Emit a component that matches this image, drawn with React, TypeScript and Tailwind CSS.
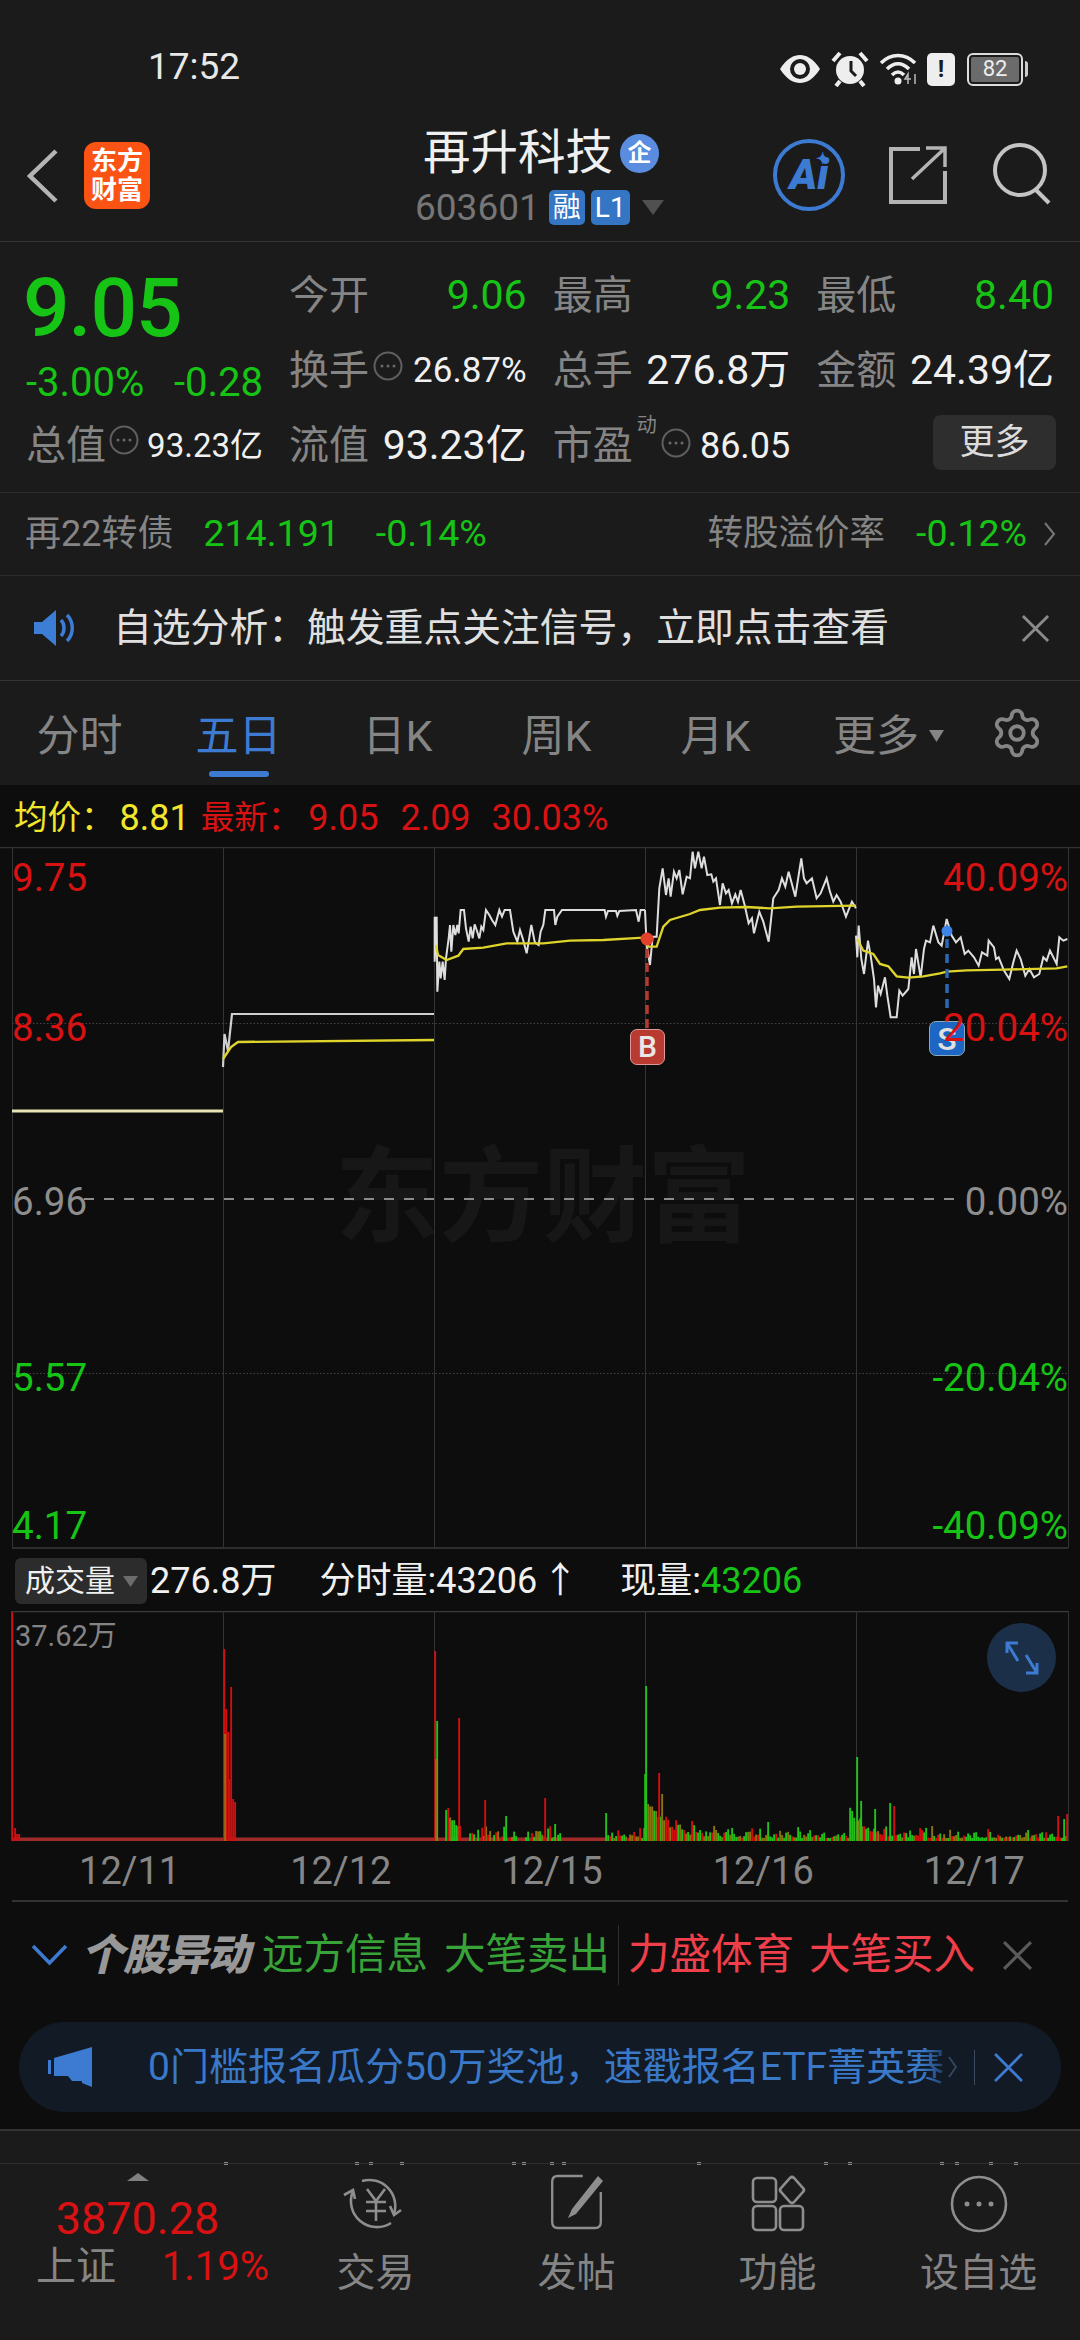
import type { ReactNode } from "react";
import { Settings } from "lucide-react";

const GREEN = "text-[#16c416]";
const RED = "text-[#d81212]";

// trace points are in 3x crop coordinates, scaled back down inside the svg
const day3White =
  "14,215 14,350 20,215 22,440 28,350 32,400 38,350 44,405 48,340 56,280 60,240 64,320 70,240 76,270 82,240 86,265 92,195 102,195 108,250 116,290 122,245 128,280 134,238 140,255 148,280 154,245 160,255 168,195 178,210 186,225 196,240 208,195 216,215 224,195 240,195 250,260 262,290 270,255 278,280 290,325 296,290 304,240 314,290 318,295 326,300 332,260 340,240 346,195 372,195 376,240 382,215 396,195 524,195 528,215 534,198 558,198 562,212 568,198 618,195 626,230 632,195 645,195";
const day4White =
  "645,195 650,300 660,360 668,275 680,275 688,130 698,70 708,150 716,100 722,155 732,80 740,100 748,75 758,148 770,95 780,100 788,20 795,70 805,20 815,70 822,35 832,90 844,88 850,110 858,100 870,180 878,115 888,145 896,135 906,175 916,148 924,170 932,135 944,180 956,235 966,220 972,265 988,200 1000,230 1016,290 1030,160 1046,135 1056,100 1066,125 1076,80 1088,125 1096,155 1114,40 1122,100 1130,115 1146,100 1160,160 1172,145 1190,100 1200,140 1210,170 1220,150 1232,170 1248,215 1256,195 1266,170 1278,190";
const day3Avg =
  "18,300 24,330 50,345 85,332 100,312 160,308 230,295 340,295 420,287 520,285 640,278 655,305 680,305 700,245 720,225 780,207 810,195 870,188 950,186 1020,190 1100,185 1278,182";
const day5White =
  "18,170 22,235 26,140 34,240 42,285 54,185 62,230 72,300 78,385 84,320 92,345 105,295 112,350 122,415 140,415 148,335 158,350 175,330 185,235 192,285 198,210 212,295 222,210 228,185 240,190 250,140 265,190 275,200 290,120 305,170 318,190 332,175 344,225 355,215 372,235 386,260 396,220 412,230 416,185 432,205 438,240 446,235 462,275 478,300 490,250 500,215 512,240 526,290 538,270 552,295 568,285 580,235 590,245 600,215 620,255 628,175 640,185 652,180";
const day5Avg =
  "22,180 40,215 70,225 90,255 115,262 140,292 175,296 220,292 270,283 290,278 350,274 460,272 620,268 652,262";

type Bar = { x: number; top: number; color: string };

const BAR_RED = "#d01010";
const BAR_GREEN = "#22c01a";
const BAR_OLIVE = "#8a7412";
const VOL_BASE = 1842;

const bigBars: Bar[] = [
  { x: 12, top: 1613, color: BAR_RED },
  { x: 224, top: 1650, color: BAR_RED },
  { x: 226, top: 1710, color: BAR_RED },
  { x: 225, top: 1735, color: BAR_OLIVE },
  { x: 228, top: 1733, color: BAR_RED },
  { x: 229, top: 1780, color: BAR_RED },
  { x: 231, top: 1688, color: BAR_RED },
  { x: 233, top: 1800, color: BAR_RED },
  { x: 235, top: 1803, color: BAR_RED },
  { x: 435, top: 1652, color: BAR_RED },
  { x: 437, top: 1722, color: BAR_GREEN },
  { x: 436, top: 1760, color: BAR_OLIVE },
  { x: 459, top: 1719, color: BAR_RED },
  { x: 485, top: 1801, color: BAR_RED },
  { x: 506, top: 1817, color: BAR_GREEN },
  { x: 545, top: 1799, color: BAR_RED },
  { x: 555, top: 1825, color: BAR_GREEN },
  { x: 606, top: 1814, color: BAR_GREEN },
  { x: 646, top: 1687, color: BAR_GREEN },
  { x: 645, top: 1775, color: BAR_GREEN },
  { x: 659, top: 1774, color: BAR_RED },
  { x: 662, top: 1795, color: BAR_OLIVE },
  { x: 692, top: 1822, color: BAR_RED },
  { x: 768, top: 1823, color: BAR_GREEN },
  { x: 857, top: 1758, color: BAR_GREEN },
  { x: 861, top: 1802, color: BAR_GREEN },
  { x: 875, top: 1810, color: BAR_GREEN },
  { x: 890, top: 1804, color: BAR_GREEN },
  { x: 894, top: 1807, color: BAR_RED },
  { x: 1058, top: 1817, color: BAR_RED },
  { x: 1067, top: 1815, color: BAR_RED },
  { x: 1064, top: 1820, color: BAR_GREEN },
];

function makeSmallBars(): Bar[] {
  let seed = 77;
  const rnd = () => {
    seed = (seed * 16807) % 2147483647;
    return seed / 2147483647;
  };
  const bars: Bar[] = [];
  const burst = (x: number, from: number, size: number, fall: number) =>
    x >= from ? size * Math.exp(-(x - from) / fall) : 0;
  for (let x = 436; x < 1068; x += 2) {
    if (x > 560 && x < 606) continue;
    const sparse = x < 606 && rnd() < 0.4;
    if (sparse) continue;
    const h =
      3 +
      rnd() * rnd() * (x < 606 ? 15 : 13) +
      burst(x, 436, 52, 14) +
      burst(x, 646, 38, 18) +
      burst(x, 850, 24, 14);
    const pick = rnd();
    const color = pick < 0.4 ? BAR_GREEN : pick < 0.7 ? BAR_OLIVE : BAR_RED;
    bars.push({ x, top: VOL_BASE - h, color });
  }
  bars.push({ x: 15, top: 1829, color: BAR_RED }, { x: 17, top: 1835, color: BAR_RED }, { x: 19, top: 1835, color: BAR_RED });
  return bars;
}

const volBars = [...makeSmallBars(), ...bigBars];

const peekMarks = [224, 355, 369, 400, 512, 522, 550, 562, 697, 824, 848, 940, 955, 989, 1014];

function Dots() {
  return (
    <svg width="30" height="30" viewBox="0 0 30 30" className="shrink-0">
      <circle cx="15" cy="15" r="13.5" fill="none" stroke="#5f5f5f" strokeWidth="2" />
      <circle cx="9" cy="15" r="1.5" fill="#6a6a6a" />
      <circle cx="15" cy="15" r="1.5" fill="#6a6a6a" />
      <circle cx="21" cy="15" r="1.5" fill="#6a6a6a" />
    </svg>
  );
}

function Cell({ label, children }: { label: ReactNode; children: ReactNode }) {
  return (
    <div className="flex items-center justify-between">
      <span className="text-[40px] leading-none text-[#858585]">{label}</span>
      {children}
    </div>
  );
}

function CloseX({ size, color, width = 3 }: { size: number; color: string; width?: number }) {
  return (
    <svg width={size} height={size} viewBox="0 0 30 30" className="shrink-0">
      <path d="M2 2 L28 28 M28 2 L2 28" stroke={color} strokeWidth={width} fill="none" />
    </svg>
  );
}

function StatusBar() {
  return (
    <div className="flex h-[92px] items-end pb-[5px] pl-[148px] pr-[52px]">
      <span className="text-[37px] leading-[40px] text-[#e8e8e8]">17:52</span>
      <div className="ml-auto flex items-center">
        <svg width="42" height="30" viewBox="0 0 42 30" className="mr-[10px]">
          <path d="M1 15 C8 4 15 1 21 1 C27 1 34 4 41 15 C34 26 27 29 21 29 C15 29 8 26 1 15Z" fill="#eee" />
          <circle cx="21" cy="15" r="10" fill="#1b1b1b" />
          <circle cx="21" cy="15" r="6" fill="#eee" />
        </svg>
        <svg width="38" height="36" viewBox="0 0 38 36" className="mr-[10px]">
          <circle cx="19" cy="19" r="14" fill="#eee" />
          <path d="M20 10 V20 L25 25" stroke="#1b1b1b" strokeWidth="3" fill="none" />
          <path d="M2 10 L9 2 M36 10 L29 2" stroke="#eee" strokeWidth="4" />
          <path d="M9 30 L5 35 M29 30 L33 35" stroke="#eee" strokeWidth="4" />
        </svg>
        <svg width="40" height="34" viewBox="0 0 40 34" className="mr-[8px]">
          <path d="M2 11 C12 1 26 1 36 11 M8 17 C15 10 23 10 30 17 M13 23 C17 19 21 19 25 23" stroke="#eee" strokeWidth="3.5" fill="none" />
          <circle cx="19" cy="29" r="3.5" fill="#eee" />
          <path d="M29 32 V22 L26 27 H32 M36 22 V32" stroke="#bbb" strokeWidth="1.5" fill="none" />
        </svg>
        <div className="mr-[12px] flex h-[33px] w-[28px] items-center justify-center rounded-[5px] bg-[#eee] text-[24px] leading-none font-bold text-[#1b1b1b]">
          !
        </div>
        <div className="flex h-[33px] w-[56px] items-center justify-center rounded-[6px] border-2 border-[#ddd] p-[2px]">
          <div className="flex h-full w-full items-center justify-center rounded-[2px] bg-[#6b6b6b] text-[22px] leading-none text-[#eee]">
            82
          </div>
        </div>
        <div className="ml-[2px] h-[16px] w-[3px] rounded-r bg-[#ccc]" />
      </div>
    </div>
  );
}

function NavBar() {
  return (
    <div className="relative flex h-[150px] items-start border-b border-[#343434] pl-[27px] pt-[50px]">
      <svg width="32" height="54" viewBox="0 0 32 54" className="mt-[7px] shrink-0">
        <path d="M29 2 L3 27 L29 52" stroke="#b4b4b4" strokeWidth="4.5" fill="none" />
      </svg>
      <div className="ml-[25px] flex h-[67px] w-[66px] shrink-0 flex-col items-center justify-center rounded-[12px] bg-[#fb5314] text-[26px] leading-[29px] font-bold text-[#fff]">
        <span>东方</span>
        <span>财富</span>
      </div>
      <div className="absolute left-[415px] top-[37px]">
        <div className="flex items-center pl-[8px]">
          <span className="text-[47.5px] leading-[48px] text-[#f0f0f0]">再升科技</span>
          <span className="ml-[7px] flex h-[39px] w-[39px] items-center justify-center rounded-full bg-[#5a8cdf] text-[24px] leading-none font-bold text-white">
            企
          </span>
        </div>
        <div className="mt-[12px] flex items-center">
          <span className="text-[37px] leading-none text-[#767676]">603601</span>
          <span className="ml-[9px] flex h-[35px] w-[36px] items-center justify-center rounded-[5px] bg-[#3475c4] text-[28px] leading-none text-white">
            融
          </span>
          <span className="ml-[6px] flex h-[35px] w-[39px] items-center justify-center rounded-[5px] bg-[#3475c4] text-[28px] leading-none text-white">
            L1
          </span>
          <svg width="22" height="15" viewBox="0 0 22 15" className="ml-[12px]">
            <path d="M0 0 H22 L11 15Z" fill="#505050" />
          </svg>
        </div>
      </div>
      <div className="ml-auto mr-[29px] mt-[-3px] flex items-start">
        <div className="relative flex h-[72px] w-[72px] items-center justify-center rounded-full border-[4px] border-[#3d7bd3] text-[42px] leading-none font-black italic text-[#3d7bd3]">
          Ai
          <span className="absolute right-[12px] top-[8px] text-[16px] leading-none not-italic">✦</span>
        </div>
        <svg width="60" height="60" viewBox="0 0 60 60" className="ml-[43px] mt-[6px]">
          <path d="M32 4 H3 V57 H57 V26" stroke="#b4b4b4" strokeWidth="4" fill="none" />
          <path d="M24 34 L56 4 M38 3 H57 V22" stroke="#b4b4b4" strokeWidth="3.5" fill="none" />
        </svg>
        <svg width="60" height="62" viewBox="0 0 60 62" className="ml-[43px] mt-[4px]">
          <circle cx="29" cy="27" r="25" stroke="#c4c4c4" strokeWidth="4" fill="none" />
          <path d="M45 47 L58 60" stroke="#c4c4c4" strokeWidth="4" fill="none" />
        </svg>
      </div>
    </div>
  );
}

function Quote() {
  return (
    <div className="flex h-[251px] border-b border-[#2c2c2c] pl-[26px] pr-[26px] pt-[16px]">
      <div className="flex w-[263px] shrink-0 flex-col pr-[26px]">
        <div className={`ml-[-3px] flex h-[100px] items-center text-[82px] leading-none font-medium tracking-[-1px] ${GREEN}`}>
          9.05
        </div>
        <div className={`flex h-[50px] items-center justify-between text-[40px] leading-none ${GREEN}`}>
          <span>-3.00%</span>
          <span>-0.28</span>
        </div>
        <div className="flex h-[75px] items-center">
          <span className="text-[40px] leading-none text-[#858585]">总值</span>
          <span className="ml-[3px] mb-[12px]">
            <Dots />
          </span>
          <span className="ml-auto text-[33px] leading-none text-[#f0f0f0]">93.23亿</span>
        </div>
      </div>
      <div className="grid flex-1 grid-cols-3 grid-rows-[75px_75px_75px] gap-x-[26px]">
        <Cell label="今开">
          <span className={`text-[41px] leading-none ${GREEN}`}>9.06</span>
        </Cell>
        <Cell label="最高">
          <span className={`text-[41px] leading-none ${GREEN}`}>9.23</span>
        </Cell>
        <Cell label="最低">
          <span className={`text-[41px] leading-none ${GREEN}`}>8.40</span>
        </Cell>
        <Cell
          label={
            <span className="flex items-start">
              换手
              <span className="ml-[4px]">
                <Dots />
              </span>
            </span>
          }
        >
          <span className="text-[35px] leading-none text-[#f0f0f0]">26.87%</span>
        </Cell>
        <Cell label="总手">
          <span className="text-[41px] leading-none text-[#f0f0f0]">276.8万</span>
        </Cell>
        <Cell label="金额">
          <span className="text-[41px] leading-none text-[#f0f0f0]">24.39亿</span>
        </Cell>
        <Cell label="流值">
          <span className="text-[41px] leading-none text-[#f0f0f0]">93.23亿</span>
        </Cell>
        <Cell
          label={
            <span className="relative flex items-center">
              市盈
              <span className="absolute left-[84px] top-[-11px] text-[20px] leading-none text-[#858585]">动</span>
              <span className="ml-[28px] mt-[-6px]">
                <Dots />
              </span>
            </span>
          }
        >
          <span className="text-[36px] leading-none text-[#f0f0f0]">86.05</span>
        </Cell>
        <div className="flex items-center justify-end">
          <div className="mr-[-2px] mt-[-6px] flex h-[55px] w-[123px] items-center justify-center rounded-[8px] bg-[#2e2e2e] text-[35px] leading-none text-[#dcdcdc]">
            更多
          </div>
        </div>
      </div>
    </div>
  );
}

function BondRow() {
  return (
    <div className="flex h-[83px] items-center border-b border-[#2c2c2c] pl-[25px] pr-[24px] text-[36px] leading-none">
      <span className="text-[#858585]">再22转债</span>
      <span className={`ml-[30px] text-[37.5px] ${GREEN}`}>214.191</span>
      <span className={`ml-[36px] text-[37.5px] ${GREEN}`}>-0.14%</span>
      <span className="ml-auto text-[35.5px] text-[#858585]">转股溢价率</span>
      <span className={`ml-[31px] text-[37.5px] ${GREEN}`}>-0.12%</span>
      <svg width="12" height="24" viewBox="0 0 12 24" className="ml-[17px]">
        <path d="M1 1 L10 12 L1 23" stroke="#777" strokeWidth="2" fill="none" />
      </svg>
    </div>
  );
}

function Notice() {
  return (
    <div className="flex h-[105px] items-center border-b border-[#343434] pl-[34px] pr-[30px]">
      <svg width="44" height="36" viewBox="0 0 44 36">
        <path d="M0 12 H8 L22 0 V36 L8 24 H0Z" fill="#3c7dd6" />
        <path d="M27 10 C31 14 31 22 27 26 M33 5 C40 12 40 24 33 31" stroke="#3c7dd6" strokeWidth="3.5" fill="none" />
      </svg>
      <span className="ml-[35px] text-[38.8px] leading-none text-[#e0e0e0]">自选分析：触发重点关注信号，立即点击查看</span>
      <span className="ml-auto">
        <CloseX size={29} color="#8a8a8a" />
      </span>
    </div>
  );
}

function Tabs() {
  const items = ["分时", "五日", "日K", "周K", "月K"];
  return (
    <div className="flex h-[104px] items-center pt-[6px] text-[43px] leading-none text-[#858585]">
      {items.map((t) => (
        <div key={t} className={`relative flex h-full w-[159px] items-center justify-center ${t === "五日" ? "text-[#3d7bd3]" : ""}`}>
          {t}
          {t === "五日" && <span className="absolute bottom-[8px] left-[50px] h-[6px] w-[60px] rounded-full bg-[#3d7bd3]" />}
        </div>
      ))}
      <div className="ml-[38px] flex items-center">
        更多
        <svg width="15" height="12" viewBox="0 0 15 12" className="ml-[10px]">
          <path d="M0 0 H15 L7.5 12Z" fill="#858585" />
        </svg>
      </div>
      <Settings size={54} strokeWidth={1.7} className="ml-[46px] mt-[-6px] text-[#858585]" />
    </div>
  );
}

const axisLabels = [
  { top: 12, left: "9.75", right: "40.09%", tone: RED },
  { top: 162, left: "8.36", right: "20.04%", tone: RED },
  { top: 336, left: "6.96", right: "0.00%", tone: "text-[#8e8e8e]" },
  { top: 512, left: "5.57", right: "-20.04%", tone: GREEN },
  { top: 660, left: "4.17", right: "-40.09%", tone: GREEN },
];

function PriceChart() {
  return (
    <div className="relative h-[702px] w-full">
      <div className="absolute left-[335px] top-[300px] text-[104px] leading-none font-bold text-[#171717]">东方财富</div>
      <svg width="1080" height="702" viewBox="0 848 1080 702" className="absolute left-0 top-0">
        <path d="M0 848.5 H1080" stroke="#333" strokeWidth="1.5" />
        <path d="M12 1549 H1068" stroke="#3a3a3a" strokeWidth="1.5" />
        <path d="M12.5 849 V1549 M223.5 849 V1549 M434.5 849 V1549 M645.5 849 V1549 M856.5 849 V1549 M1068.5 849 V1549" stroke="#333" strokeWidth="1" />
        <path d="M12 1024.5 H1068 M12 1374.5 H1068" stroke="#444" strokeWidth="1" strokeDasharray="1.5 2" />
        <path d="M84 1200 H958" stroke="#8c8c8c" strokeWidth="2" strokeDasharray="10 10" />
        <path d="M12 1112 H223" stroke="#e6e3b4" strokeWidth="3" />
        <path d="M223 1068 L224.5 1035 L228 1052 L232 1015 H434" stroke="#cfcfcf" strokeWidth="2.2" fill="none" />
        <path d="M223 1060 L231 1048 L238 1043 L434 1041" stroke="#dfd42c" strokeWidth="2.4" fill="none" />
        <g transform="translate(430 846) scale(0.3333)">
          <polyline points={day3White} stroke="#dedede" strokeWidth="6" fill="none" />
          <polyline points={day4White} stroke="#dedede" strokeWidth="6" fill="none" />
          <polyline points={day3Avg} stroke="#dfd42c" strokeWidth="7" fill="none" />
        </g>
        <g transform="translate(850 880) scale(0.3333)">
          <polyline points={day5White} stroke="#dedede" strokeWidth="6" fill="none" />
          <polyline points={day5Avg} stroke="#dfd42c" strokeWidth="7" fill="none" />
        </g>
        <path d="M647 950 V1030" stroke="#b33a30" strokeWidth="3.5" strokeDasharray="9 5" />
        <circle cx="647" cy="940" r="6.5" fill="#e2412c" />
        <path d="M947 940 V1012" stroke="#2a6ab4" strokeWidth="3.5" strokeDasharray="9 6" />
        <circle cx="947" cy="932" r="5.5" fill="#3f84e8" />
      </svg>
      <div className="absolute left-[630px] top-[182px] flex h-[36px] w-[35px] items-center justify-center rounded-[7px] border border-[#d99] bg-[#b83a30] text-[30px] leading-none font-medium text-[#e8e8e8]">
        B
      </div>
      <div className="absolute left-[929px] top-[174px] flex h-[35px] w-[36px] items-center justify-center rounded-[7px] border border-[#8ab] bg-[#1e66c4] text-[32px] leading-none font-medium text-[#e0e0e0]">
        S
      </div>
      {axisLabels.map((row) => (
        <div key={row.left} className={`absolute left-[12px] right-[12px] flex justify-between text-[38.5px] leading-none ${row.tone}`} style={{ top: row.top }}>
          <span>{row.left}</span>
          <span>{row.right}</span>
        </div>
      ))}
    </div>
  );
}

function Volume() {
  return (
    <div>
      <div className="flex h-[62px] items-center whitespace-nowrap pl-[15px] pt-[2px] text-[36px] leading-none text-[#f0f0f0]">
        <div className="flex h-[46px] w-[132px] shrink-0 items-center rounded-[6px] bg-[#2c2c2c] pl-[10px] text-[30px]">
          成交量
          <svg width="15" height="11" viewBox="0 0 15 11" className="ml-[8px]">
            <path d="M0 0 H15 L7.5 11Z" fill="#6c6c6c" />
          </svg>
        </div>
        <span className="ml-[3px]">276.8万</span>
        <span className="ml-[43px]">分时量:43206</span>
        <span className="ml-[5px]">↑</span>
        <span className="ml-[42px]">现量:</span>
        <span className={GREEN}>43206</span>
      </div>
      <div className="relative h-[230px]">
        <svg width="1080" height="230" viewBox="0 1612 1080 230" className="absolute left-0 top-0">
          <path d="M11 1612.5 H1069" stroke="#3c3c3c" strokeWidth="1.5" />
          <path d="M223.5 1612 V1842 M434.5 1612 V1842 M645.5 1612 V1842 M856.5 1612 V1842 M1068.5 1612 V1842" stroke="#333" strokeWidth="1" />
          <rect x="12" y="1838.5" width="594" height="3.5" fill="#a02a2a" />
          {volBars.map((b, i) => (
            <rect key={i} x={b.x - 0.8} y={b.top} width="1.9" height={VOL_BASE - b.top} fill={b.color} />
          ))}
        </svg>
        <span className="absolute left-[15px] top-[11px] text-[29px] leading-none text-[#848484]">37.62万</span>
        <div className="absolute left-[987px] top-[12px] flex h-[69px] w-[69px] items-center justify-center rounded-full bg-[#1b2f48]">
          <svg width="34" height="34" viewBox="0 0 34 34">
            <path d="M2 12 V2 H13 M2 2 L13 20 M32 22 V32 H21 M32 32 L21 14" stroke="#3d7bd3" strokeWidth="3" fill="none" />
          </svg>
        </div>
      </div>
      <div className="grid h-[59px] grid-cols-5 items-center pl-[24px] text-[38px] leading-none text-[#868686]">
        {["12/11", "12/12", "12/15", "12/16", "12/17"].map((d) => (
          <div key={d} className="text-center">
            {d}
          </div>
        ))}
      </div>
      <div className="mx-[12px] h-[2px] bg-[#333]" />
    </div>
  );
}

function Movers() {
  return (
    <div className="flex h-[102px] items-center whitespace-nowrap pl-[31px] pt-[4px] text-[41.5px] leading-none">
      <svg width="37" height="22" viewBox="0 0 37 22" className="shrink-0">
        <path d="M2 2 L18.5 19 L35 2" stroke="#3d7bd3" strokeWidth="3.5" fill="none" />
      </svg>
      <span className="ml-[13px] text-[43px] font-black italic tracking-[-1px] text-[#989898]">个股异动</span>
      <span className="ml-[13px] text-[#38a338]">远方信息</span>
      <span className="ml-[16px] text-[#38a338]">大笔卖出</span>
      <span className="ml-[8px] h-[60px] w-px bg-[#2e2e2e]" />
      <span className="ml-[9px] text-[#ef3f4a]">力盛体育</span>
      <span className="ml-[15px] text-[#ef3f4a]">大笔买入</span>
      <span className="ml-[27px]">
        <CloseX size={31} color="#5a5a5a" />
      </span>
    </div>
  );
}

function Banner() {
  return (
    <div className="mx-[19px] mt-[18px] flex h-[90px] items-center rounded-full bg-[#111a25] pl-[29px]">
      <svg width="46" height="40" viewBox="0 0 46 40" className="shrink-0">
        <path d="M0 13 H3 V27 H0Z M6 11 L44 0 V40 L34 36 V34 L24 34 L20 29 H6Z" fill="#3d7bd3" />
      </svg>
      <div className="relative ml-[54px] flex w-[809px] shrink-0 items-center overflow-hidden">
        <div className="whitespace-nowrap text-[39px] leading-none text-[#3a78c8]">0门槛报名瓜分50万奖池，速戳报名ETF菁英赛</div>
        <div className="absolute right-0 top-0 flex h-full w-[34px] items-center justify-end bg-gradient-to-r from-transparent to-[#111a25]">
          <svg width="9" height="22" viewBox="0 0 9 22">
            <path d="M1 1 L8 11 L1 21" stroke="#34465c" strokeWidth="2" fill="none" />
          </svg>
        </div>
      </div>
      <span className="ml-[17px] h-[35px] w-px bg-[#3a4a5c]" />
      <span className="ml-[18px]">
        <CloseX size={31} color="#3d7bd3" width={2.6} />
      </span>
    </div>
  );
}

function NavIcon({ children }: { children: ReactNode }) {
  return (
    <svg width="70" height="62" viewBox="0 0 70 62" fill="none" stroke="#8e8e8e" strokeWidth="2.6">
      {children}
    </svg>
  );
}

function NavItem({ label, children }: { label: string; children: ReactNode }) {
  return (
    <div className="flex w-[201px] shrink-0 flex-col items-center pt-[9px]">
      <NavIcon>{children}</NavIcon>
      <span className="mt-[19px] text-[39px] leading-none text-[#858585]">{label}</span>
    </div>
  );
}

function BottomBar() {
  return (
    <div className="flex flex-1 flex-col bg-[#1b1b1b]">
      <div className="h-[34px] border-t-2 border-[#333]">
        <svg width="1080" height="34" viewBox="0 0 1080 34">
          {peekMarks.map((x) => (
            <rect key={x} x={x} y="31" width="4" height="3" fill="#888" />
          ))}
        </svg>
      </div>
      <div className="flex flex-1 border-t border-[#2e2e2e]">
        <div className="flex w-[275px] shrink-0 flex-col items-center pt-[9px]">
          <svg width="22" height="8" viewBox="0 0 22 8">
            <path d="M0 8 L11 0 L22 8Z" fill="#808080" />
          </svg>
          <span className={`mt-[15px] text-[45px] leading-none ${RED}`}>3870.28</span>
          <div className="mt-[6px] ml-[36px] flex w-[233px] items-center justify-between self-start text-[40px] leading-none">
            <span className="text-[#858585]">上证</span>
            <span className={RED}>1.19%</span>
          </div>
        </div>
        <NavItem label="交易">
          <path d="M21 8 A26 26 0 0 1 53 41" />
          <path d="M49 33 L53 42 L60 37" />
          <path d="M50 50 A26 26 0 0 1 12 18" />
          <path d="M3 22 L12 17 L14 26" />
          <path d="M26 16 L35 28 L44 16 M25 29 H45 M25 38 H45 M35 28 V48" />
        </NavItem>
        <NavItem label="发帖">
          <path d="M42 4 H14 Q8 4 8 10 V50 Q8 56 14 56 H56 Q62 56 62 50 V20" transform="translate(3 -1) scale(0.9 1)" />
          <path d="M56 3 L61 8 L34 41 L26 45 L30 36Z" fill="#8e8e8e" stroke="none" />
        </NavItem>
        <NavItem label="功能">
          <rect x="10" y="5" width="23" height="24" rx="4" />
          <rect x="10" y="33" width="23" height="24" rx="4" />
          <rect x="37" y="33" width="23" height="24" rx="4" />
          <path d="M47 5 Q49 3 51 5 L60 15 Q62 17 60 19 L51 29 Q49 31 47 29 L38 19 Q36 17 38 15Z" />
        </NavItem>
        <NavItem label="设自选">
          <circle cx="35" cy="31" r="27" />
          <circle cx="23" cy="31" r="2.5" fill="#8e8e8e" stroke="none" />
          <circle cx="35" cy="31" r="2.5" fill="#8e8e8e" stroke="none" />
          <circle cx="47" cy="31" r="2.5" fill="#8e8e8e" stroke="none" />
        </NavItem>
      </div>
    </div>
  );
}

export default function App() {
  return (
    <div className="flex h-[2340px] w-[1080px] flex-col overflow-hidden bg-[#1b1b1b] font-['Roboto','Noto_Sans_CJK_SC',sans-serif]">
      <StatusBar />
      <NavBar />
      <Quote />
      <BondRow />
      <Notice />
      <Tabs />
      <div className="bg-[#0d0d0d]">
        <div className="flex h-[62px] items-center pl-[14px] pt-[3px] text-[33.5px] leading-none">
          <span className="text-[#f2e62a]">均价：</span>
          <span className="ml-[5px] text-[36px] text-[#f2e62a]">8.81</span>
          <span className={`ml-[11px] ${RED}`}>最新：</span>
          <span className={`ml-[7px] text-[36px] ${RED}`}>9.05</span>
          <span className={`ml-[22px] text-[36px] ${RED}`}>2.09</span>
          <span className={`ml-[21px] text-[36px] ${RED}`}>30.03%</span>
        </div>
        <PriceChart />
        <Volume />
        <Movers />
        <Banner />
        <div className="h-[17px]" />
      </div>
      <BottomBar />
    </div>
  );
}
